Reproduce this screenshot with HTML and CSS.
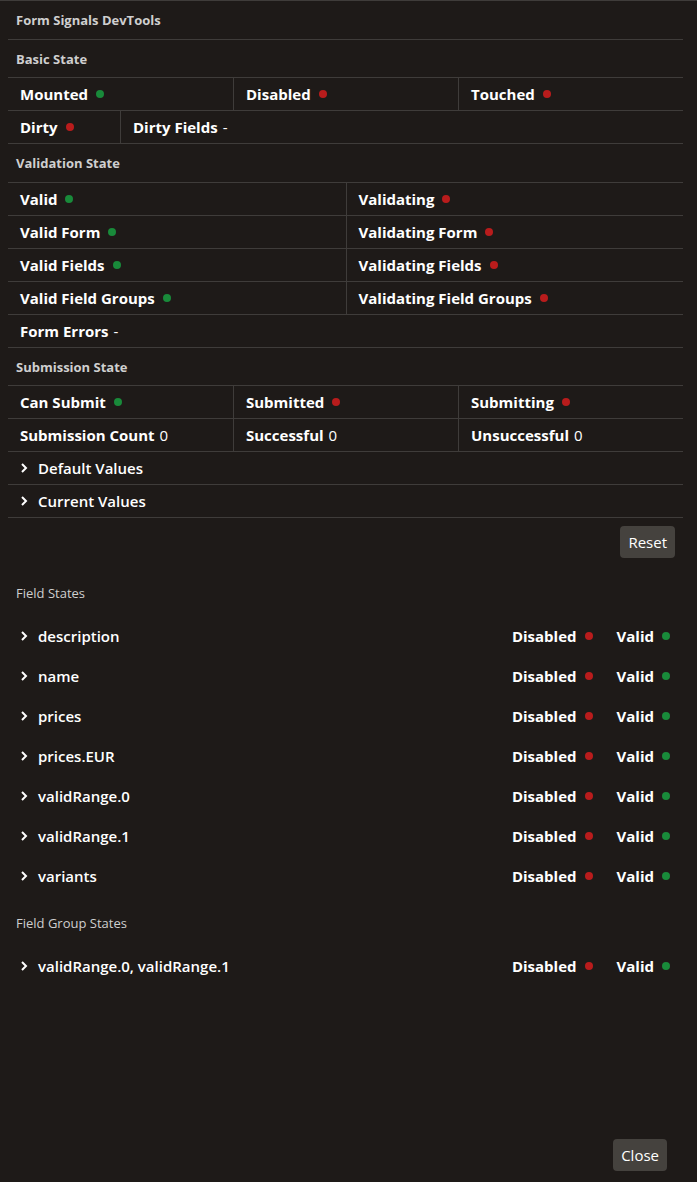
FILE: index.html
```html
<!DOCTYPE html>
<html>
<head>
<meta charset="utf-8">
<link rel="stylesheet" href="styles.css">
</head>
<body>
<div class="panel">
  <div class="content">
    <div class="title">Form Signals DevTools</div>

    <div class="section-head">Basic State</div>
    <div class="row cols-3">
      <div class="cell"><span class="label">Mounted</span><span class="dot green"></span></div>
      <div class="cell"><span class="label">Disabled</span><span class="dot red"></span></div>
      <div class="cell"><span class="label">Touched</span><span class="dot red"></span></div>
    </div>
    <div class="row cols-dirty">
      <div class="cell"><span class="label">Dirty</span><span class="dot red"></span></div>
      <div class="cell"><span class="label">Dirty Fields</span><span class="val">-</span></div>
    </div>

    <div class="section-head tall">Validation State</div>
    <div class="row cols-2">
      <div class="cell"><span class="label">Valid</span><span class="dot green"></span></div>
      <div class="cell"><span class="label">Validating</span><span class="dot red"></span></div>
    </div>
    <div class="row cols-2">
      <div class="cell"><span class="label">Valid Form</span><span class="dot green"></span></div>
      <div class="cell"><span class="label">Validating Form</span><span class="dot red"></span></div>
    </div>
    <div class="row cols-2">
      <div class="cell"><span class="label">Valid Fields</span><span class="dot green"></span></div>
      <div class="cell"><span class="label">Validating Fields</span><span class="dot red"></span></div>
    </div>
    <div class="row cols-2">
      <div class="cell"><span class="label">Valid Field Groups</span><span class="dot green"></span></div>
      <div class="cell"><span class="label">Validating Field Groups</span><span class="dot red"></span></div>
    </div>
    <div class="row cols-1">
      <div class="cell"><span class="label">Form Errors</span><span class="val">-</span></div>
    </div>

    <div class="section-head">Submission State</div>
    <div class="row cols-3">
      <div class="cell"><span class="label">Can Submit</span><span class="dot green"></span></div>
      <div class="cell"><span class="label">Submitted</span><span class="dot red"></span></div>
      <div class="cell"><span class="label">Submitting</span><span class="dot red"></span></div>
    </div>
    <div class="row cols-3">
      <div class="cell"><span class="label">Submission Count</span><span class="val">0</span></div>
      <div class="cell"><span class="label">Successful</span><span class="val">0</span></div>
      <div class="cell"><span class="label">Unsuccessful</span><span class="val">0</span></div>
    </div>
    <div class="row cols-1">
      <div class="cell toggle"><svg class="chev" viewBox="0 0 8 12" width="8" height="12"><path d="M2 2 L6 6 L2 10" fill="none" stroke="#fff" stroke-width="2"/></svg><span class="toggle-text">Default Values</span></div>
    </div>
    <div class="row cols-1">
      <div class="cell toggle"><svg class="chev" viewBox="0 0 8 12" width="8" height="12"><path d="M2 2 L6 6 L2 10" fill="none" stroke="#fff" stroke-width="2"/></svg><span class="toggle-text">Current Values</span></div>
    </div>

    <div class="actions"><button class="btn">Reset</button></div>

    <div class="sub-head">Field States</div>
    <div class="field-list">
      <div class="field"><div class="field-name"><svg class="chev" viewBox="0 0 8 12" width="8" height="12"><path d="M2 2 L6 6 L2 10" fill="none" stroke="#fff" stroke-width="2"/></svg><span>description</span></div><div class="field-flags"><span class="flag"><span class="label">Disabled</span><span class="dot red"></span></span><span class="flag"><span class="label">Valid</span><span class="dot green"></span></span></div></div>
      <div class="field"><div class="field-name"><svg class="chev" viewBox="0 0 8 12" width="8" height="12"><path d="M2 2 L6 6 L2 10" fill="none" stroke="#fff" stroke-width="2"/></svg><span>name</span></div><div class="field-flags"><span class="flag"><span class="label">Disabled</span><span class="dot red"></span></span><span class="flag"><span class="label">Valid</span><span class="dot green"></span></span></div></div>
      <div class="field"><div class="field-name"><svg class="chev" viewBox="0 0 8 12" width="8" height="12"><path d="M2 2 L6 6 L2 10" fill="none" stroke="#fff" stroke-width="2"/></svg><span>prices</span></div><div class="field-flags"><span class="flag"><span class="label">Disabled</span><span class="dot red"></span></span><span class="flag"><span class="label">Valid</span><span class="dot green"></span></span></div></div>
      <div class="field"><div class="field-name"><svg class="chev" viewBox="0 0 8 12" width="8" height="12"><path d="M2 2 L6 6 L2 10" fill="none" stroke="#fff" stroke-width="2"/></svg><span>prices.EUR</span></div><div class="field-flags"><span class="flag"><span class="label">Disabled</span><span class="dot red"></span></span><span class="flag"><span class="label">Valid</span><span class="dot green"></span></span></div></div>
      <div class="field"><div class="field-name"><svg class="chev" viewBox="0 0 8 12" width="8" height="12"><path d="M2 2 L6 6 L2 10" fill="none" stroke="#fff" stroke-width="2"/></svg><span>validRange.0</span></div><div class="field-flags"><span class="flag"><span class="label">Disabled</span><span class="dot red"></span></span><span class="flag"><span class="label">Valid</span><span class="dot green"></span></span></div></div>
      <div class="field"><div class="field-name"><svg class="chev" viewBox="0 0 8 12" width="8" height="12"><path d="M2 2 L6 6 L2 10" fill="none" stroke="#fff" stroke-width="2"/></svg><span>validRange.1</span></div><div class="field-flags"><span class="flag"><span class="label">Disabled</span><span class="dot red"></span></span><span class="flag"><span class="label">Valid</span><span class="dot green"></span></span></div></div>
      <div class="field"><div class="field-name"><svg class="chev" viewBox="0 0 8 12" width="8" height="12"><path d="M2 2 L6 6 L2 10" fill="none" stroke="#fff" stroke-width="2"/></svg><span>variants</span></div><div class="field-flags"><span class="flag"><span class="label">Disabled</span><span class="dot red"></span></span><span class="flag"><span class="label">Valid</span><span class="dot green"></span></span></div></div>
    </div>

    <div class="sub-head group-head">Field Group States</div>
    <div class="field-list">
      <div class="field"><div class="field-name"><svg class="chev" viewBox="0 0 8 12" width="8" height="12"><path d="M2 2 L6 6 L2 10" fill="none" stroke="#fff" stroke-width="2"/></svg><span>validRange.0, validRange.1</span></div><div class="field-flags"><span class="flag"><span class="label">Disabled</span><span class="dot red"></span></span><span class="flag"><span class="label">Valid</span><span class="dot green"></span></span></div></div>
    </div>
  </div>
  <div class="footer"><button class="btn">Close</button></div>
</div>
</body>
</html>
```

FILE: styles.css
```css
* { box-sizing: border-box; }
html, body { margin: 0; padding: 0; }
body {
  background: #1e1a18;
  color: #fff;
  font-family: "Open Sans", "Noto Sans", sans-serif;
}
.panel {
  height: 1182px;
  display: flex;
  flex-direction: column;
  border-top: 1px solid #3f3c3a;
}
.content {
  padding: 0 14px 0 8px;
}
.title {
  height: 39px;
  display: flex;
  align-items: center;
  padding-left: 8px;
  font-size: 13px;
  font-weight: 700;
  color: #cfcfcf;
  border-bottom: 1px solid #3f3c3a;
}
.section-head {
  height: 38px;
  display: flex;
  align-items: center;
  padding-left: 8px;
  font-size: 13px;
  font-weight: 700;
  color: #cfcfcf;
  border-bottom: 1px solid #3f3c3a;
}
.section-head.tall { height: 39px; }
.row {
  display: grid;
  height: 33px;
  border-bottom: 1px solid #3f3c3a;
}
.cols-3 { grid-template-columns: 1fr 1fr 1fr; }
.cols-2 { grid-template-columns: 1fr 1fr; }
.cols-1 { grid-template-columns: 1fr; }
.cols-dirty { grid-template-columns: 112px 1fr; }
.cell {
  display: flex;
  align-items: center;
  padding-left: 12px;
  font-size: 15px;
}
.cell + .cell { border-left: 1px solid #3f3c3a; }
.label { font-weight: 700; color: #fff; }
.val { margin-left: 5px; font-weight: 400; }
.dot {
  width: 8px;
  height: 8px;
  border-radius: 50%;
  margin-left: 8px;
  display: inline-block;
}
.green { background: #198a3a; }
.red { background: #b91c1c; }
.chev { margin-right: 10px; flex: none; }
.toggle-text { font-weight: 600; }
.actions {
  display: flex;
  justify-content: flex-end;
  padding: 8px 8px 0 0;
}
.btn {
  background: #45423e;
  color: #fff;
  border: none;
  border-radius: 4px;
  height: 32px;
  padding: 0 8px;
  font-family: inherit;
  font-size: 15px;
}
.sub-head {
  margin-top: 27px;
  padding-left: 8px;
  font-size: 13px;
  color: #cfcfcf;
  height: 16px;
  line-height: 16px;
}
.sub-head.group-head { margin-top: 19px; }
.field-list {
  padding-top: 15px;
}
.field {
  height: 40px;
  display: flex;
  align-items: center;
  justify-content: space-between;
  padding-left: 12px;
  padding-right: 13px;
  font-size: 15px;
}
.field-name {
  display: flex;
  align-items: center;
  font-weight: 600;
}
.field-flags {
  display: flex;
  align-items: center;
  gap: 24px;
}
.flag { display: flex; align-items: center; }
.footer {
  margin-top: auto;
  display: flex;
  justify-content: flex-end;
  padding: 0 30px 11px 0;
}
```
